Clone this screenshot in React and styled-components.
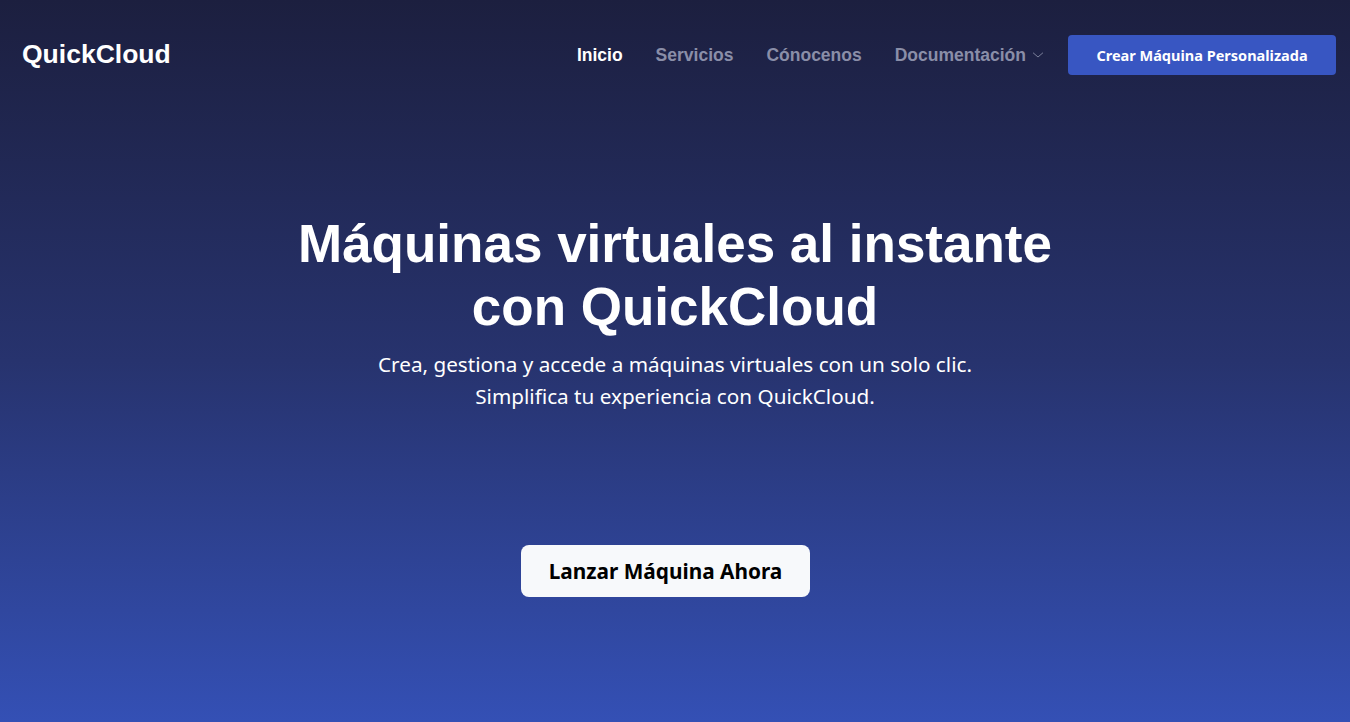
import React from "react";
import styled, { createGlobalStyle } from "styled-components";

const GlobalStyle = createGlobalStyle`
  * { box-sizing: border-box; }
  body {
    margin: 0;
    font-family: "Liberation Sans", Arial, sans-serif;
  }
`;

const Page = styled.div`
  min-height: 722px;
  background: linear-gradient(180deg, #1c1f3f 0%, #27336e 50%, #3450b5 100%);
  display: flex;
  flex-direction: column;
`;

const Nav = styled.nav`
  display: flex;
  align-items: center;
  justify-content: space-between;
  padding: 35px 14px 0 22px;
`;

const Logo = styled.div`
  color: #fff;
  font-size: 26.5px;
  font-weight: 700;
  margin-top: -2px;
`;

const NavRight = styled.div`
  display: flex;
  align-items: center;
`;

const Links = styled.ul`
  display: flex;
  align-items: center;
  gap: 33px;
  list-style: none;
  margin: 0 22px 0 0;
  padding: 0;
`;

const Link = styled.li`
  font-size: 17.5px;
  font-weight: 700;
  color: ${(p) => (p.$active ? "#ffffff" : "#8a8ea8")};
  display: flex;
  align-items: center;
  gap: 4px;
`;

const PrimaryButton = styled.button`
  background: #3856c2;
  color: #fff;
  border: none;
  border-radius: 4px;
  width: 268px;
  height: 40px;
  font-family: "Noto Sans", "Open Sans", sans-serif;
  font-size: 14.5px;
  font-weight: 700;
`;

const Hero = styled.section`
  display: flex;
  flex-direction: column;
  align-items: center;
  padding-top: 137px;
`;

const Title = styled.h1`
  margin: 0;
  color: #fff;
  font-size: 53px;
  line-height: 63px;
  font-weight: 700;
  text-align: center;
  max-width: 800px;
`;

const Subtitle = styled.p`
  margin: 10px 0 0;
  color: #fff;
  font-family: "Noto Sans", "Open Sans", sans-serif;
  font-size: 20.7px;
  line-height: 32px;
  text-align: center;
`;

const CtaRow = styled.div`
  display: flex;
  justify-content: center;
  margin-top: 133px;
  padding-right: 19px;
`;

const CtaButton = styled.button`
  background: #f7f9fb;
  color: #000;
  border: none;
  border-radius: 8px;
  width: 289px;
  height: 52px;
  font-family: "Noto Sans", "Open Sans", sans-serif;
  font-size: 20.8px;
  font-weight: 700;
`;

const Chevron = () => (
  <svg width="16" height="16" viewBox="0 0 24 24" fill="none" stroke="#8a8ea8" strokeWidth="1.3" strokeLinecap="round" strokeLinejoin="round">
    <path d="M5 9l7 6 7-6" />
  </svg>
);

export default function App() {
  return (
    <>
      <GlobalStyle />
      <Page>
        <Nav>
          <Logo>QuickCloud</Logo>
          <NavRight>
            <Links>
              <Link $active>Inicio</Link>
              <Link>Servicios</Link>
              <Link>Cónocenos</Link>
              <Link>
                Documentación <Chevron />
              </Link>
            </Links>
            <PrimaryButton>Crear Máquina Personalizada</PrimaryButton>
          </NavRight>
        </Nav>
        <Hero>
          <Title>Máquinas virtuales al instante con QuickCloud</Title>
          <Subtitle>
            Crea, gestiona y accede a máquinas virtuales con un solo clic.
            <br />
            Simplifica tu experiencia con QuickCloud.
          </Subtitle>
        </Hero>
        <CtaRow>
          <CtaButton>Lanzar Máquina Ahora</CtaButton>
        </CtaRow>
      </Page>
    </>
  );
}
